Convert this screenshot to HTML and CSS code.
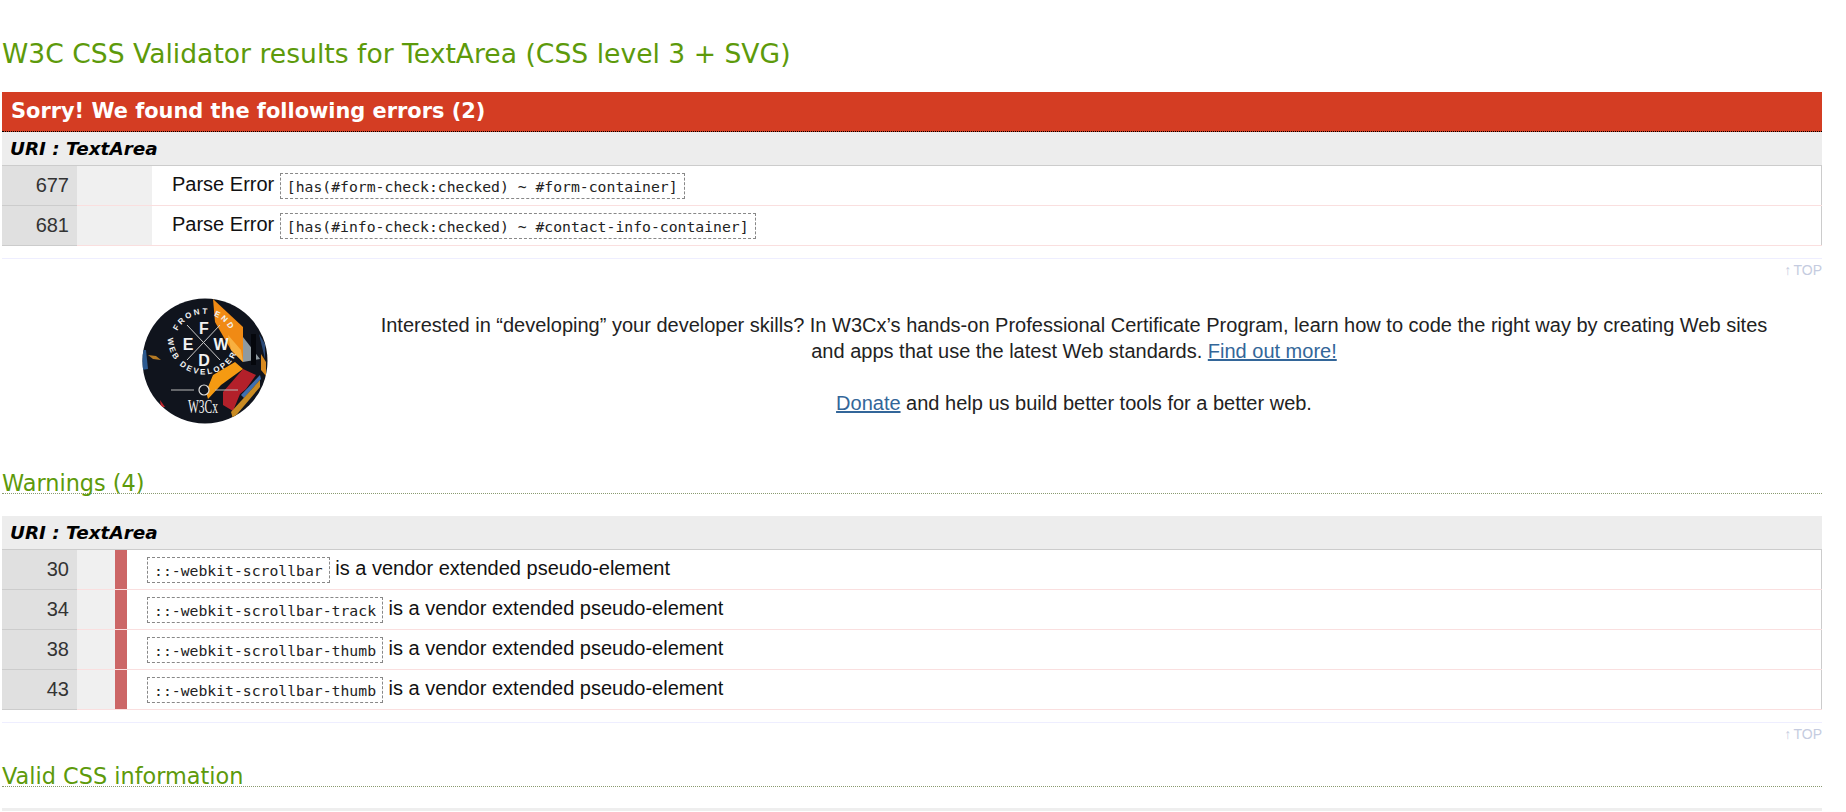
FILE: index.html
```html
<!DOCTYPE html>
<html lang="en">
<head>
    <meta charset="UTF-8">
    <meta name="viewport" content="width=device-width, initial-scale=1.0">
    <title>W3C CSS Validator results for TextArea (CSS level 3 + SVG)</title>
    <link rel="stylesheet" href="styles.css">
</head>
<body>
    <div class="page">
        <h2 class="title">W3C CSS Validator results for TextArea (CSS level 3 + SVG)</h2>

        <div class="errors">
            <h3 class="errors-head">Sorry! We found the following errors (2)</h3>
            <h4 class="uri">URI : TextArea</h4>
            <table class="results">
                <colgroup><col class="col-line"><col class="col-context-wide"><col></colgroup>
                <tr>
                    <td class="line">677</td>
                    <td class="context"></td>
                    <td class="message">Parse Error <code>[has(#form-check:checked) ~ #form-container]</code></td>
                </tr>
                <tr>
                    <td class="line">681</td>
                    <td class="context"></td>
                    <td class="message">Parse Error <code>[has(#info-check:checked) ~ #contact-info-container]</code></td>
                </tr>
            </table>
        </div>
        <hr class="rule">
        <a class="top" href="#">↑ TOP</a>

        <div class="promo">
            <div class="promo-logo">
                <svg width="126" height="126" viewBox="0 0 126 126">
                    <defs>
                        <clipPath id="disc"><circle cx="63" cy="63" r="62.5"/></clipPath>
                        <path id="arc-top" d="M33 45a29 29 0 0 1 58 0"/>
                        <path id="arc-bottom" d="M26 38a36 36 0 0 0 70 14"/>
                    </defs>
                    <g clip-path="url(#disc)">
                        <rect width="126" height="126" fill="#10141d"/>
                        <path d="M71 1 101 29V64L89 52 73 24Z" fill="#f08a14"/>
                        <path d="M86 37 99 52 101 64 89 52Z" fill="#f8b040"/>
                        <path d="M101 39 118 61 101 64Z" fill="#8f9aa0"/>
                        <path d="M109 36h5v31h-5z" fill="#05070c"/>
                        <path d="M117 36 123 46V61Z" fill="#2a4a78"/>
                        <path d="M119 56 124 64V78L119 72Z" fill="#d88a20"/>
                        <path d="M81 94 101 71 114 77 104 91 98 96 91 113 81 107Z" fill="#b3202a"/>
                        <path d="M71 77 93 64 101 71 79 87 66 101 64 94Z" fill="#f59a12"/>
                        <path d="M99 97 118 77 119 81 102 100Z" fill="#3f6fb0"/>
                        <path d="M89 114 118 82V89L91 121Z" fill="#c98b22"/>
                        <path d="M0 52H4L6 71 0 72Z" fill="#2c5a90"/>
                        <path d="M6 57 14 58 19 62 11 61Z" fill="#b57a24"/>
                        <path d="M18 102 23 109 19 109Z" fill="#c1272d"/>
                        <path d="M45 27 78 62M78 27 45 62" stroke="#c9c9c9" stroke-width="1" fill="none"/>
                        <path d="M29 92H52M73 92H96" stroke="#b9b9b9" stroke-width="1.2"/>
                        <circle cx="62" cy="92" r="5" fill="#10141d" stroke="#ddd" stroke-width="1.2"/>
                        <text class="logo-ring"><textPath href="#arc-top" startOffset="50%" text-anchor="middle">FRONT END</textPath></text>
                        <text class="logo-ring"><textPath href="#arc-bottom" startOffset="50%" text-anchor="middle">WEB DEVELOPER</textPath></text>
                        <text class="logo-letter" x="62" y="36" text-anchor="middle">F</text>
                        <text class="logo-letter" x="46" y="52" text-anchor="middle">E</text>
                        <text class="logo-letter" x="79" y="52" text-anchor="middle">W</text>
                        <text class="logo-letter" x="62" y="68" text-anchor="middle">D</text>
                        <text class="logo-brand" x="46" y="115" textLength="30" lengthAdjust="spacingAndGlyphs">W3Cx</text>
                    </g>
                </svg>
            </div>
            <div class="promo-copy">
                <p>Interested in “developing” your developer skills? In W3Cx’s hands-on Professional Certificate Program, learn how to code the right way by creating Web sites and apps that use the latest Web standards. <a href="#">Find out more!</a></p>
                <p><a href="#">Donate</a> and help us build better tools for a better web.</p>
            </div>
        </div>

        <h3 class="section-title warnings-title">Warnings (4)</h3>
        <h4 class="uri warnings-uri">URI : TextArea</h4>
        <table class="results">
            <colgroup><col class="col-line"><col class="col-context"><col class="col-level"><col></colgroup>
            <tr>
                <td class="line">30</td>
                <td class="context"></td>
                <td class="level"></td>
                <td class="message"><code>::-webkit-scrollbar</code> is a vendor extended pseudo-element</td>
            </tr>
            <tr>
                <td class="line">34</td>
                <td class="context"></td>
                <td class="level"></td>
                <td class="message"><code>::-webkit-scrollbar-track</code> is a vendor extended pseudo-element</td>
            </tr>
            <tr>
                <td class="line">38</td>
                <td class="context"></td>
                <td class="level"></td>
                <td class="message"><code>::-webkit-scrollbar-thumb</code> is a vendor extended pseudo-element</td>
            </tr>
            <tr>
                <td class="line">43</td>
                <td class="context"></td>
                <td class="level"></td>
                <td class="message"><code>::-webkit-scrollbar-thumb</code> is a vendor extended pseudo-element</td>
            </tr>
        </table>
        <hr class="rule">
        <a class="top" href="#">↑ TOP</a>

        <h3 class="section-title valid-title">Valid CSS information</h3>
        <div class="valid-bar"></div>
    </div>
</body>
</html>
```

FILE: styles.css
```css
html, body {
    height: 100%;
    overflow: hidden;
}

body {
    margin: 0;
    padding: 0;
    background-color: white;
    color: #222;
    font-family: "Liberation Sans", Arial, sans-serif;
}

.page {
    width: 1820px;
    margin-left: 2px;
}

.title {
    margin: 0;
    padding-top: 38px;
    box-sizing: border-box;
    height: 92px;
    font-family: "DejaVu Sans", Verdana, sans-serif;
    font-size: 26.6px;
    font-weight: normal;
    line-height: 32px;
    color: #5d9a0b;
}

.errors-head {
    margin: 0;
    height: 39px;
    padding-left: 9px;
    border-bottom: 1px dotted #000;
    background-color: #d43d23;
    color: white;
    font-family: "DejaVu Sans", Verdana, sans-serif;
    font-size: 20.9px;
    font-weight: bold;
    line-height: 39px;
}

.uri {
    margin: 0;
    height: 33px;
    padding-left: 8px;
    background-color: #ededed;
    color: #000;
    font-family: "DejaVu Sans", Verdana, sans-serif;
    font-size: 18.4px;
    font-style: italic;
    font-weight: bold;
    line-height: 33px;
}

.results {
    width: 100%;
    table-layout: fixed;
    border-collapse: collapse;
    border-top: 1px solid #ccc;
}

.col-line { width: 75px; }
.col-context-wide { width: 75px; }
.col-context { width: 38px; }
.col-level { width: 12px; }

.results td {
    height: 39px;
    padding: 0;
    border-bottom: 1px solid #fadfdf;
}

.results .line {
    padding-right: 8px;
    background-color: #e0e0e0;
    border-bottom-color: #ccc;
    color: #333;
    font-size: 20px;
    text-align: right;
}

.context {
    background-color: #f0f0f0;
}

.level {
    background-color: #cc6666;
}

.results .message {
    padding-left: 20px;
    border-right: 1px solid #ccc;
    color: #111;
    font-size: 20px;
}

code {
    display: inline-block;
    height: 26px;
    box-sizing: border-box;
    padding: 0 6px;
    border: 1px dashed #888;
    color: #222;
    font-family: "DejaVu Sans Mono", "Liberation Mono", monospace;
    font-size: 14.75px;
    line-height: 26px;
    vertical-align: -1px;
}

.rule {
    margin: 12px 0 0;
    height: 1px;
    border: 0;
    background-color: #eeeeff;
}

.top {
    display: block;
    height: 24px;
    color: #c5cce0;
    font-size: 14px;
    line-height: 22px;
    text-align: right;
    text-decoration: none;
    word-spacing: -1.5px;
}

.promo {
    display: flex;
    align-items: center;
    height: 148px;
    padding-top: 4px;
}

.promo-logo {
    width: 200px;
    padding-left: 140px;
    display: flex;
}

.promo-copy {
    width: 1400px;
    margin-left: 32px;
    padding-top: 5px;
    font-size: 20px;
    line-height: 26px;
    text-align: center;
}

.promo-copy p {
    margin: 0 0 26px;
}

.promo-copy p:last-child {
    margin-bottom: 0;
}

.promo-copy a {
    color: #369;
}

.logo-ring {
    fill: #f2f2f2;
    font-family: "Liberation Sans", Arial, sans-serif;
    font-size: 8px;
    font-weight: bold;
    letter-spacing: 2.2px;
}

.logo-letter {
    fill: #f2f2f2;
    font-family: "Liberation Sans", Arial, sans-serif;
    font-size: 16px;
    font-weight: bold;
}

.logo-brand {
    fill: #f2f2f2;
    font-family: "Liberation Serif", serif;
    font-size: 18px;
}

.section-title {
    margin: 0;
    height: 30px;
    border-bottom: 1px dotted #8a9a70;
    font-family: "DejaVu Sans", Verdana, sans-serif;
    font-size: 22.4px;
    font-weight: normal;
    line-height: 40px;
    color: #5d9a0b;
}

.warnings-title {
    margin-top: 28px;
}

.warnings-uri {
    margin-top: 22px;
}

.valid-title {
    margin-top: 9px;
}

.valid-bar {
    height: 3px;
    margin-top: 21px;
    background-color: #eeeeee;
}
```
